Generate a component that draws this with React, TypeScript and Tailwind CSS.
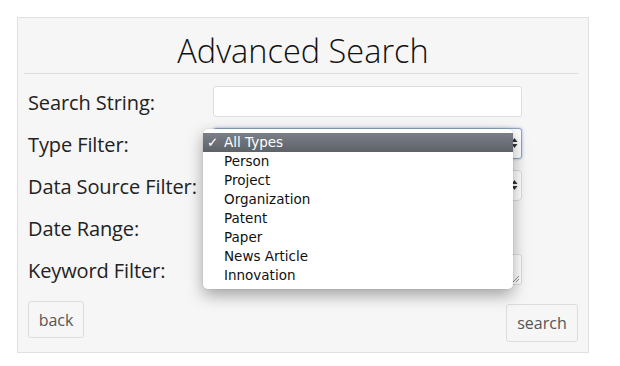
import React from 'react';

const types = ['Person', 'Project', 'Organization', 'Patent', 'Paper', 'News Article', 'Innovation'];

function Arrows() {
  return (
    <svg width="7" height="12" viewBox="0 0 7 12" className="text-[#333]">
      <path d="M3.5 1 L6.5 5 L0.5 5 Z" fill="currentColor" />
      <path d="M3.5 11 L6.5 7 L0.5 7 Z" fill="currentColor" />
    </svg>
  );
}

function Row({ label, children }: { label: string; children: React.ReactNode }) {
  return (
    <div className="flex h-[42px] items-center">
      <div className="w-[185px] pt-[3px] text-[20px] tracking-[-0.1px] text-[#222]">{label}</div>
      {children}
    </div>
  );
}

export default function App() {
  return (
    <div className="h-[366px] w-[620px] bg-white pl-[17px] pt-[17px] font-['Open_Sans',sans-serif]">
      <div className="relative h-[336px] w-[572px] border border-[#e0e0e0] bg-[#f6f6f6]">
        <h1 className="pt-[11px] text-center text-[32.5px] font-light leading-[44px] text-[#111]">Advanced Search</h1>
        <div className="ml-[6px] mr-[10px] h-px bg-[#dcdcdc]" />

        <div className="pl-[10px] pt-[6px]">
          <Row label="Search String:">
            <div className="h-[31px] w-[309px] rounded-[3px] border border-[#ddd] bg-white" />
          </Row>
          <Row label="Type Filter:">
            <div className="flex h-[31px] w-[309px] items-center justify-end rounded-[3px] border border-[#8fa4bf] bg-white pr-[3px] shadow-[0_0_3px_#9ab3d6]">
              <Arrows />
            </div>
          </Row>
          <Row label="Data Source Filter:">
            <div className="flex h-[31px] w-[309px] items-center justify-end rounded-[4px] border border-[#ddd] bg-white pr-[3px]">
              <Arrows />
            </div>
          </Row>
          <Row label="Date Range:">
            <div className="flex items-center gap-[14px]">
              <div className="h-[32px] w-[100px] rounded-[4px] border border-[#e6e6e6] bg-white" />
              <div className="h-[32px] w-[102px] rounded-[4px] border border-[#e6e6e6] bg-white" />
            </div>
          </Row>
          <Row label="Keyword Filter:">
            <div className="relative h-[31px] w-[309px] rounded-[3px] border border-[#ddd] bg-white">
              <svg width="8" height="8" viewBox="0 0 8 8" className="absolute bottom-[1px] right-[1px]">
                <path d="M1 7 L7 1 M4 7 L7 4" stroke="#777" strokeWidth="0.8" />
              </svg>
            </div>
          </Row>
        </div>

        <div className="flex items-start justify-between pl-[10px] pr-[10px] pt-[11px]">
          <button className="h-[37px] w-[56px] rounded-[3px] border border-[#ddd] bg-[#f6f6f6] text-[16px] text-[#555]">back</button>
          <button className="mt-[3px] h-[38px] w-[72px] rounded-[3px] border border-[#ddd] bg-[#f6f6f6] text-[16px] text-[#555]">search</button>
        </div>

        <div className="absolute left-[185px] top-[111px] w-[310px] rounded-[5px] bg-white/[0.97] py-[4px] font-['DejaVu_Sans',sans-serif] text-[13.5px] leading-[19px] text-[#111] shadow-[0_6px_16px_rgba(0,0,0,0.35),0_0_1px_rgba(0,0,0,0.3)]">
          <div className="flex h-[19px] items-center bg-gradient-to-b from-[#7b8088] to-[#5d6269] pl-[4px] text-white">
            <span className="w-[17px]">✓</span>
            <span>All Types</span>
          </div>
          {types.map((t) => (
            <div key={t} className="h-[19px] pl-[21px]">{t}</div>
          ))}
        </div>
      </div>
    </div>
  );
}
